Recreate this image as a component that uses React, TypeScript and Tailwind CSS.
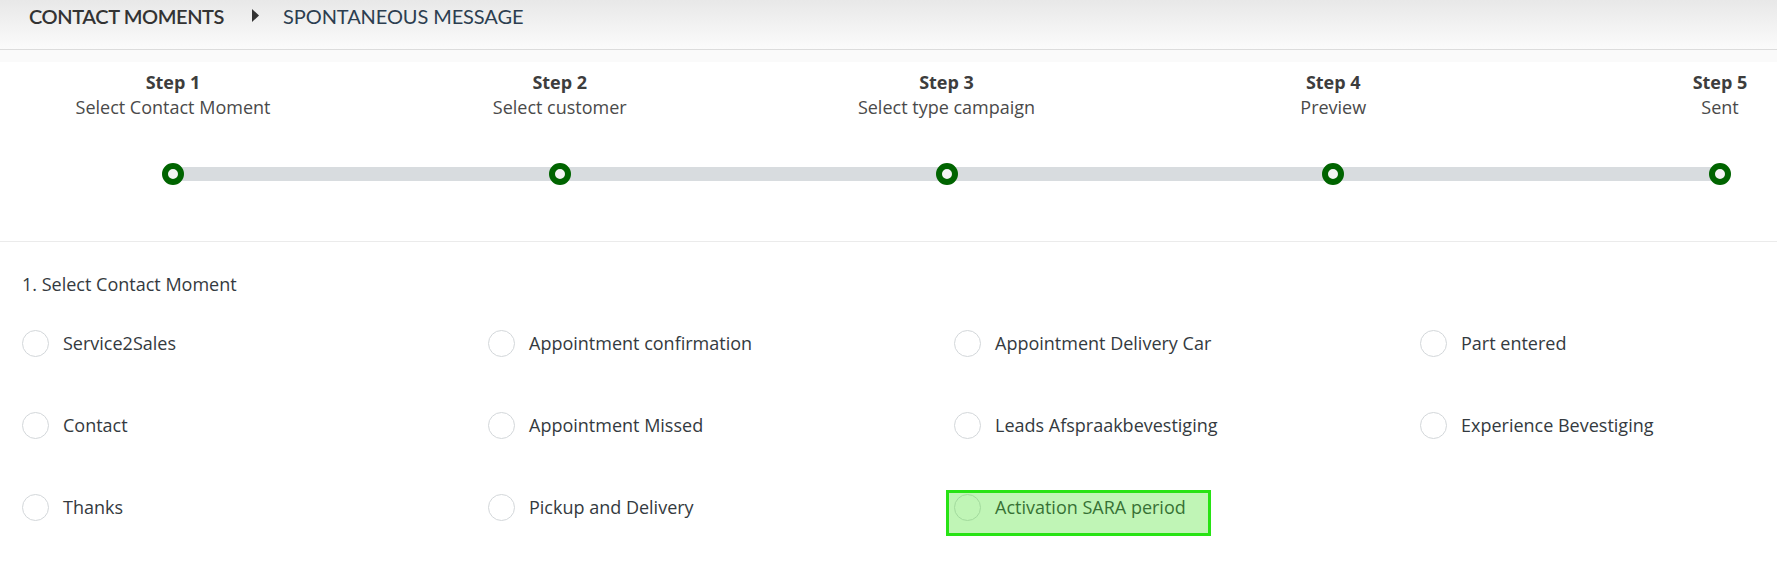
import React from "react";

const steps = [
  { title: "Step 1", desc: "Select Contact Moment" },
  { title: "Step 2", desc: "Select customer" },
  { title: "Step 3", desc: "Select type campaign" },
  { title: "Step 4", desc: "Preview" },
  { title: "Step 5", desc: "Sent" },
];

const options: (string | null)[][] = [
  ["Service2Sales", "Appointment confirmation", "Appointment Delivery Car", "Part entered"],
  ["Contact", "Appointment Missed", "Leads Afspraakbevestiging", "Experience Bevestiging"],
  ["Thanks", "Pickup and Delivery", "Activation SARA period", null],
];

function Option({ label, highlight }: { label: string; highlight?: boolean }) {
  return (
    <div className="relative flex items-center gap-[14px] h-[27px]">
      <span className="w-[27px] h-[27px] rounded-full border border-[#d3d7da] bg-white shrink-0" />
      <span className="text-[18px] leading-[25px] text-[#343a40] whitespace-nowrap">{label}</span>
      {highlight && (
        <div className="pointer-events-none absolute left-[-8px] top-[-4.5px] w-[265px] h-[46px] border-[3px] border-[#27e314] bg-[rgba(64,224,32,0.33)]" />
      )}
    </div>
  );
}

export default function App() {
  return (
    <div className="w-[1777px] h-[570px] overflow-hidden bg-white font-['Open_Sans',sans-serif]">
      {/* Breadcrumb header */}
      <div className="h-[50px] border-b border-[#dcdcdc] bg-linear-to-b from-[#e8e8e8] to-[#fbfbfb] flex items-start pt-[4px] pl-[29px] font-['Lato',sans-serif] text-[20px] leading-[25px]">
        <span className="font-semibold text-[#333333] tracking-[-0.4px]">CONTACT MOMENTS</span>
        <svg className="ml-[28px] mr-[24px] mt-[5px]" width="7" height="13" viewBox="0 0 7 13">
          <polygon points="0,0 7,6.5 0,13" fill="#333333" />
        </svg>
        <span className="text-[#2c3e50] tracking-[-0.1px]">SPONTANEOUS MESSAGE</span>
      </div>

      <div className="h-[12px] bg-[#fafafa]" />

      {/* Stepper */}
      <div className="pt-[8px] pb-[56px] border-b border-[#ebebeb]">
        <div className="relative flex ml-[-20.375px]">
          <div className="absolute left-[193.375px] top-[97px] w-[1547px] h-[14px] bg-[#d8dcdf]" />
          {steps.map((s) => (
            <div key={s.title} className="w-[386.75px] shrink-0 flex flex-col items-center">
              <div className="text-[18px] leading-[25px] font-bold text-[#3d3d3d] whitespace-nowrap">{s.title}</div>
              <div className="text-[18px] leading-[25px] text-[#4a4a4a] whitespace-nowrap">{s.desc}</div>
              <div className="relative z-10 mt-[43px] w-[22px] h-[22px] rounded-full border-[6px] border-[#006400] bg-[#f4f4f4]" />
            </div>
          ))}
        </div>
      </div>

      {/* Contact moments */}
      <div className="pl-[22px] pt-[30px]">
        <div className="text-[18px] leading-[25px] text-[#343a40]">1. Select Contact Moment</div>
        <div className="mt-[33px] grid grid-cols-[repeat(4,466px)] gap-y-[55px]">
          {options.flat().map((o, i) =>
            o ? (
              <Option key={i} label={o} highlight={o === "Activation SARA period"} />
            ) : (
              <div key={i} />
            )
          )}
        </div>
      </div>
    </div>
  );
}
